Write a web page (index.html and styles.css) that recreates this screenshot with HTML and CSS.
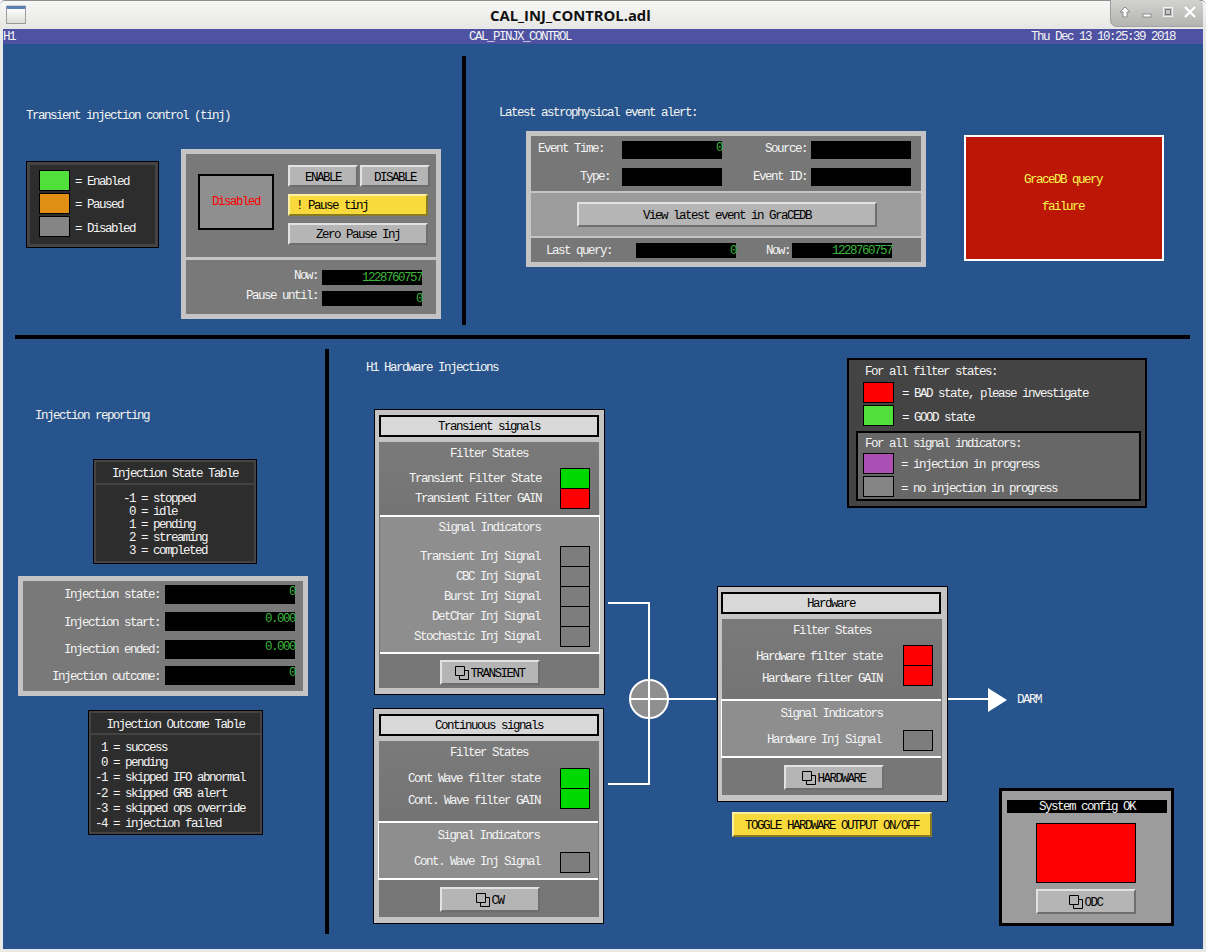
FILE: index.html
```html
<!DOCTYPE html>
<html lang="en">
<head>
    <meta charset="UTF-8">
    <title>CAL_INJ_CONTROL.adl</title>
    <link rel="stylesheet" href="styles.css">
</head>
<body>
<div class="window">
    <div class="titlebar">
        <div class="win-icon"></div>
        <div class="win-title">CAL_INJ_CONTROL.adl</div>
        <div class="win-buttons">
            <svg width="14" height="14" viewBox="0 0 14 14"><path d="M7 2 L12 7 H9 V12 H5 V7 H2 Z" fill="#fff" stroke="#8a8a8a" stroke-width="1"/></svg>
            <svg width="14" height="14" viewBox="0 0 14 14"><rect x="3" y="9" width="8" height="3" fill="#fff" stroke="#8a8a8a"/></svg>
            <svg width="14" height="14" viewBox="0 0 14 14"><rect x="2.5" y="2.5" width="9" height="9" fill="none" stroke="#f2f2f2" stroke-width="1"/><rect x="4.5" y="4.5" width="5" height="5" fill="none" stroke="#777"/></svg>
            <svg width="14" height="14" viewBox="0 0 14 14"><path d="M2 2 L12 12 M12 2 L2 12" stroke="#fff" stroke-width="2.4" fill="none"/></svg>
        </div>
    </div>
    <div class="statusbar">
        <div class="txt status-text status-left">H1</div>
        <div class="txt status-text status-mid">CAL_PINJX_CONTROL</div>
        <div class="txt status-text status-right">Thu Dec 13 10:25:39 2018</div>
    </div>

    <div class="screen">
        <!-- divider lines -->
        <div class="rule rule-top-v"></div>
        <div class="rule rule-mid-h"></div>
        <div class="rule rule-low-v"></div>

        <div class="txt heading h-tinj">Transient injection control (tinj)</div>
        <div class="txt heading h-event">Latest astrophysical event alert:</div>
        <div class="txt heading h-report">Injection reporting</div>
        <div class="txt heading h-hw">H1 Hardware Injections</div>

        <!-- tinj legend -->
        <div class="tinj-legend">
            <div class="legend-row"><i class="swatch sw-green"></i><span class="txt">= Enabled</span></div>
            <div class="legend-row"><i class="swatch sw-orange"></i><span class="txt">= Paused</span></div>
            <div class="legend-row"><i class="swatch sw-gray"></i><span class="txt">= Disabled</span></div>
        </div>

        <!-- tinj control -->
        <div class="tinj-panel">
            <div class="tinj-top">
                <div class="state-box txt">Disabled</div>
                <div class="tinj-buttons">
                    <div class="btn-pair">
                        <div class="btn btn-half txt">ENABLE</div>
                        <div class="btn btn-half txt">DISABLE</div>
                    </div>
                    <div class="btn btn-yellow btn-wide txt">! Pause tinj</div>
                    <div class="btn btn-wide txt">Zero Pause Inj</div>
                </div>
            </div>
            <div class="tinj-bottom">
                <div class="field-row"><span class="txt field-label">Now:</span><span class="readout w100 txt">1228760757</span></div>
                <div class="field-row"><span class="txt field-label">Pause until:</span><span class="readout w100 txt">0</span></div>
            </div>
        </div>

        <!-- event alert -->
        <div class="event-panel">
            <div class="event-fields">
                <div class="event-row">
                    <span class="txt ev-l1">Event Time:</span><span class="readout w100 tall txt">0</span>
                    <span class="txt ev-l2">Source:</span><span class="readout w100 tall txt"></span>
                </div>
                <div class="event-row">
                    <span class="txt ev-l1 ev-type">Type:</span><span class="readout w100 tall txt"></span>
                    <span class="txt ev-l2">Event ID:</span><span class="readout w100 tall txt"></span>
                </div>
            </div>
            <div class="event-view">
                <div class="btn btn-view txt">View latest event in GraCEDB</div>
            </div>
            <div class="event-query">
                <span class="txt eq-label">Last query:</span><span class="readout w100 txt">0</span>
                <span class="txt eq-now">Now:</span><span class="readout w100 txt">1228760757</span>
            </div>
        </div>

        <div class="grace-box">
            <div class="txt">GraceDB query</div>
            <div class="txt">failure</div>
        </div>

        <!-- reporting -->
        <div class="table-box state-table">
            <div class="table-head txt">Injection State Table</div>
            <pre class="table-body txt">-1 = stopped
 0 = idle
 1 = pending
 2 = streaming
 3 = completed</pre>
        </div>

        <div class="report-panel">
            <div class="report-row"><span class="txt">Injection state:</span><span class="readout w130 txt">0</span></div>
            <div class="report-row"><span class="txt">Injection start:</span><span class="readout w130 txt">0.000</span></div>
            <div class="report-row"><span class="txt">Injection ended:</span><span class="readout w130 txt">0.000</span></div>
            <div class="report-row"><span class="txt">Injection outcome:</span><span class="readout w130 txt">0</span></div>
        </div>

        <div class="table-box outcome-table">
            <div class="table-head txt">Injection Outcome Table</div>
            <pre class="table-body txt"> 1 = success
 0 = pending
-1 = skipped IFO abnormal
-2 = skipped GRB alert
-3 = skipped ops override
-4 = injection failed</pre>
        </div>

        <!-- signal path -->
        <svg class="wires" width="420" height="200" viewBox="0 0 420 200">
            <path d="M0 1 H41 V182 H0 M41 97 H108 M340 97 H384" fill="none" stroke="#fff" stroke-width="2"/>
            <circle cx="41" cy="97" r="19" fill="#8f8f8f" stroke="#fff" stroke-width="2"/>
            <path d="M22 97 H108 M41 78 V116" fill="none" stroke="#fff" stroke-width="2"/>
            <path d="M380 86 L399 98 L380 110 Z" fill="#fff"/>
        </svg>
        <div class="txt darm">DARM</div>

        <!-- filter blocks -->
        <div class="block block-transient">
            <div class="block-title txt">Transient signals</div>
            <div class="block-body">
                <div class="sec-filter sf-transient">
                    <div class="sec-name txt">Filter States</div>
                    <div class="sig-rows fr-transient">
                        <div class="sig-row"><span class="txt">Transient Filter State</span><i class="led led-green"></i></div>
                        <div class="sig-row"><span class="txt">Transient Filter GAIN</span><i class="led led-red"></i></div>
                    </div>
                </div>
                <div class="sec-signal ss-transient">
                    <div class="sec-name txt">Signal Indicators</div>
                    <div class="sig-rows sr-transient">
                        <div class="sig-row"><span class="txt">Transient Inj Signal</span><i class="led"></i></div>
                        <div class="sig-row"><span class="txt">CBC Inj Signal</span><i class="led"></i></div>
                        <div class="sig-row"><span class="txt">Burst Inj Signal</span><i class="led"></i></div>
                        <div class="sig-row"><span class="txt">DetChar Inj Signal</span><i class="led"></i></div>
                        <div class="sig-row"><span class="txt">Stochastic Inj Signal</span><i class="led"></i></div>
                    </div>
                </div>
                <div class="sec-foot foot-transient">
                    <div class="btn btn-rel txt"><svg class="rel-icon" width="14" height="14" viewBox="0 0 14 14"><path d="M0.5 0.5 H9.5 V9.5 H0.5 Z M9.5 4.5 H13.5 V13.5 H4.5 V9.5" fill="none" stroke="#000"/></svg>TRANSIENT</div>
                </div>
            </div>
        </div>

        <div class="block block-cw">
            <div class="block-title txt">Continuous signals</div>
            <div class="block-body">
                <div class="sec-filter sf-cw">
                    <div class="sec-name txt">Filter States</div>
                    <div class="sig-rows fr-cw">
                        <div class="sig-row"><span class="txt">Cont Wave filter state</span><i class="led led-green"></i></div>
                        <div class="sig-row"><span class="txt">Cont. Wave filter GAIN</span><i class="led led-green"></i></div>
                    </div>
                </div>
                <div class="sec-signal ss-cw">
                    <div class="sec-name txt">Signal Indicators</div>
                    <div class="sig-rows sr-cw">
                        <div class="sig-row"><span class="txt">Cont. Wave Inj Signal</span><i class="led"></i></div>
                    </div>
                </div>
                <div class="sec-foot foot-cw">
                    <div class="btn btn-rel txt"><svg class="rel-icon" width="14" height="14" viewBox="0 0 14 14"><path d="M0.5 0.5 H9.5 V9.5 H0.5 Z M9.5 4.5 H13.5 V13.5 H4.5 V9.5" fill="none" stroke="#000"/></svg>CW</div>
                </div>
            </div>
        </div>

        <div class="block block-hw">
            <div class="block-title txt">Hardware</div>
            <div class="block-body">
                <div class="sec-filter sf-hw">
                    <div class="sec-name txt">Filter States</div>
                    <div class="sig-rows fr-hw">
                        <div class="sig-row"><span class="txt">Hardware filter state</span><i class="led led-red"></i></div>
                        <div class="sig-row"><span class="txt">Hardware filter GAIN</span><i class="led led-red"></i></div>
                    </div>
                </div>
                <div class="sec-signal ss-hw">
                    <div class="sec-name txt">Signal Indicators</div>
                    <div class="sig-rows sr-hw">
                        <div class="sig-row"><span class="txt">Hardware Inj Signal</span><i class="led"></i></div>
                    </div>
                </div>
                <div class="sec-foot foot-hw">
                    <div class="btn btn-rel txt"><svg class="rel-icon" width="14" height="14" viewBox="0 0 14 14"><path d="M0.5 0.5 H9.5 V9.5 H0.5 Z M9.5 4.5 H13.5 V13.5 H4.5 V9.5" fill="none" stroke="#000"/></svg>HARDWARE</div>
                </div>
            </div>
        </div>

        <div class="btn btn-yellow btn-toggle txt">TOGGLE HARDWARE OUTPUT ON/OFF</div>

        <!-- colour key -->
        <div class="key-panel">
            <div class="key-head txt">For all filter states:</div>
            <div class="key-row"><i class="swatch sw-red"></i><span class="txt">= BAD state, please investigate</span></div>
            <div class="key-row"><i class="swatch sw-green"></i><span class="txt">= GOOD state</span></div>
            <div class="key-inner">
                <div class="key-head txt">For all signal indicators:</div>
                <div class="key-row"><i class="swatch sw-purple"></i><span class="txt">= injection in progress</span></div>
                <div class="key-row"><i class="swatch sw-gray"></i><span class="txt">= no injection in progress</span></div>
            </div>
        </div>

        <!-- odc -->
        <div class="odc-panel">
            <div class="odc-head txt">System config OK</div>
            <div class="odc-light"></div>
            <div class="btn btn-rel txt"><svg class="rel-icon" width="14" height="14" viewBox="0 0 14 14"><path d="M0.5 0.5 H9.5 V9.5 H0.5 Z M9.5 4.5 H13.5 V13.5 H4.5 V9.5" fill="none" stroke="#000"/></svg>ODC</div>
        </div>
    </div>
</div>
</body>
</html>
```

FILE: styles.css
```css
* {
    box-sizing: border-box;
}

html, body {
    margin: 0;
    padding: 0;
    width: 1206px;
    height: 952px;
    overflow: hidden;
    background: #fff;
}

.window {
    width: 1206px;
    height: 952px;
    display: flex;
    flex-direction: column;
    background: #e8e8e6;
    border-radius: 5px 5px 0 0;
    border-top: 1px solid #8e8e8e;
    padding: 0 3px 3px;
}

.titlebar {
    height: 28px;
    flex: none;
    margin: 0 -3px;
    padding-left: 6px;
    display: flex;
    align-items: flex-start;
    position: relative;
    background: linear-gradient(#f7f7f5, #e6e6e4);
    border-radius: 5px 5px 0 0;
}

.win-icon {
    width: 20px;
    height: 18px;
    margin-top: 5px;
    border: 1px solid #9a9a9a;
    border-top: 3px solid #5b80b8;
    border-radius: 1px;
    background: linear-gradient(#fdfdfd, #dededc);
    box-shadow: 0 -1px 0 #cfcfcf;
}

.win-title {
    position: absolute;
    left: 490px;
    top: 4px;
    font-family: "Open Sans", sans-serif;
    font-weight: 700;
    font-size: 14.8px;
    line-height: 20px;
    color: #111;
}

.win-buttons {
    position: absolute;
    right: 3px;
    top: -1px;
    width: 93px;
    height: 27px;
    padding: 0 6px 2px 7px;
    display: flex;
    align-items: center;
    justify-content: space-between;
    background: linear-gradient(#d2d2d0, #b4b4b2);
    border-radius: 0 5px 0 7px;
    border-left: 1px solid #9d9d9d;
    border-bottom: 1px solid #a3a3a1;
}

.statusbar {
    height: 15px;
    flex: none;
    background: #4f52a3;
    display: flex;
    align-items: center;
}

.status-text {
    color: #d9daea;
}

.status-left { width: 466px; }
.status-mid { width: 562px; }

/* the display itself: a free canvas of widgets, like the MEDM screen it shows */
.screen {
    position: relative;
    flex: 1;
    background: #27548c;
}

.txt {
    font-family: "Liberation Mono", monospace;
    font-size: 12.5px;
    letter-spacing: -1.5px;
    line-height: 14px;
    color: #f4f4f4;
    white-space: pre;
}

.rule {
    position: absolute;
    background: #000;
}

.rule-top-v { left: 459px; top: 12px; width: 4px; height: 269px; }
.rule-mid-h { left: 12px; top: 291px; width: 1175px; height: 4px; }
.rule-low-v { left: 322px; top: 305px; width: 4px; height: 585px; }

.heading {
    position: absolute;
}

.h-tinj { left: 23px; top: 65px; }
.h-event { left: 496px; top: 62px; }
.h-report { left: 32px; top: 365px; }
.h-hw { left: 363px; top: 317px; }

.swatch {
    display: block;
    width: 31px;
    height: 21px;
    border: 1px solid #000;
    flex: none;
}

.sw-green { background: #51e03b; }
.sw-orange { background: #e19015; }
.sw-gray { background: #858585; }
.sw-red { background: #ff0000; }
.sw-purple { background: #ab4fb5; }

.tinj-legend {
    position: absolute;
    left: 23px;
    top: 117px;
    width: 133px;
    height: 87px;
    padding: 8px 0 0 12px;
    border: 1px solid #000;
    outline: 3px solid #444;
    outline-offset: -4px;
    background: #2d2d2d;
    display: flex;
    flex-direction: column;
    gap: 2px;
}

.legend-row {
    display: flex;
    align-items: center;
    gap: 5px;
}

.legend-row .txt {
    padding-top: 2px;
}

.legend-row:last-child .txt {
    padding-top: 4px;
}

.btn {
    display: flex;
    align-items: center;
    justify-content: center;
    padding-top: 2px;
    background: #b5b5b5;
    color: #000;
    border: 2px solid;
    border-color: #e2e2e2 #6e6e6e #6e6e6e #e2e2e2;
}

.btn-yellow {
    background: #f9da3c;
    border-color: #fdf0a0 #8a7a20 #8a7a20 #fdf0a0;
}

.tinj-panel {
    position: absolute;
    left: 178px;
    top: 105px;
    width: 260px;
    height: 170px;
    border: 5px solid #c4c4c4;
    background: #797979;
    display: flex;
    flex-direction: column;
}

.tinj-top {
    height: 103px;
    padding: 11px 0 0 12px;
    display: flex;
    gap: 14px;
}

.state-box {
    width: 76px;
    height: 56px;
    margin-top: 9px;
    border: 2px solid #000;
    background: #8f8f8f;
    color: #ff0000;
    display: flex;
    align-items: center;
    justify-content: center;
    padding-bottom: 1px;
}

.tinj-buttons {
    display: flex;
    flex-direction: column;
    gap: 7px;
}

.btn-pair {
    display: flex;
    gap: 2px;
}

.btn-half {
    width: 70px;
    height: 22px;
    padding-top: 3px;
}

.btn-wide {
    width: 140px;
    height: 22px;
}

.btn-yellow.btn-wide {
    justify-content: flex-start;
    padding-left: 6px;
}

.tinj-bottom {
    flex: 1;
    border-top: 3px solid #c4c4c4;
    padding: 9px 14px 0 0;
    display: flex;
    flex-direction: column;
    align-items: flex-end;
    gap: 4px;
}

.field-row {
    display: flex;
    align-items: center;
    gap: 4px;
}

.field-label {
    padding-bottom: 2px;
}

.field-row + .field-row .field-label {
    padding-bottom: 4px;
}

.readout {
    display: block;
    height: 15px;
    background: #000;
    color: #3db53d;
    text-align: right;
    line-height: 16px;
}

.w100 { width: 100px; }
.w130 { width: 130px; height: 19px; line-height: 15px; }
.tall { height: 18px; line-height: 15px; }

.event-panel {
    position: absolute;
    left: 523px;
    top: 87px;
    width: 400px;
    height: 136px;
    border: 5px solid #c4c4c4;
    background: #c4c4c4;
    display: flex;
    flex-direction: column;
}

.event-fields {
    height: 55px;
    background: #777;
    padding-top: 5px;
    display: flex;
    flex-direction: column;
    gap: 9px;
}

.event-row {
    display: flex;
    align-items: center;
}

.ev-l1 {
    width: 91px;
    padding-left: 7px;
}

.ev-type {
    padding-left: 49px;
}

.ev-l2 {
    width: 89px;
    text-align: right;
    padding-right: 4px;
}

.event-row:first-child .ev-l1,
.event-row:first-child .ev-l2 {
    padding-bottom: 2px;
}

.event-view {
    height: 43px;
    margin-top: 2px;
    background: #9c9c9c;
    display: flex;
    justify-content: center;
    padding: 9px 0 0 2px;
}

.btn-view {
    width: 300px;
    height: 25px;
}

.event-query {
    height: 24px;
    margin-top: 2px;
    background: #777;
    display: flex;
    align-items: center;
}

.eq-label {
    width: 105px;
    padding: 2px 0 0 15px;
}

.eq-now {
    width: 56px;
    padding: 2px 0 0 30px;
}

.grace-box {
    position: absolute;
    left: 961px;
    top: 91px;
    width: 200px;
    height: 126px;
    border: 2px solid #fff;
    background: #bc1606;
    display: flex;
    flex-direction: column;
    align-items: center;
    padding: 36px 2px 0 0;
    gap: 13px;
}

.grace-box .txt {
    color: #f7f74a;
}

.table-box {
    position: absolute;
    border: 2px solid #000;
    outline: 2px solid #444;
    outline-offset: -3px;
    background: #2d2d2d;
}

.state-table {
    left: 90px;
    top: 415px;
    width: 164px;
    height: 105px;
}

.outcome-table {
    left: 85px;
    top: 666px;
    width: 175px;
    height: 125px;
}

.table-head {
    height: 24px;
    line-height: 26px;
    text-align: center;
    border-bottom: 2px solid #444;
}

.outcome-table .table-head {
    height: 23px;
}

.table-body {
    margin: 0;
    padding-left: 28px;
    padding-top: 8px;
    line-height: 13px;
}

.outcome-table .table-body {
    padding-left: 5px;
    padding-top: 6px;
    line-height: 15.2px;
}

.report-panel {
    position: absolute;
    left: 15px;
    top: 532px;
    width: 290px;
    height: 120px;
    border: 5px solid #c4c4c4;
    background: #797979;
    padding-top: 4px;
    display: flex;
    flex-direction: column;
    gap: 8px;
}

.report-row {
    display: flex;
    justify-content: flex-end;
    align-items: center;
    gap: 5px;
    padding-right: 8px;
}

.report-row:nth-child(even) .txt:first-child {
    padding-top: 2px;
}

.report-row:nth-child(3) { margin-top: 1px; }
.report-row:nth-child(4) { margin-top: -1px; }

.wires {
    position: absolute;
    left: 605px;
    top: 558px;
}

.darm {
    position: absolute;
    left: 1014px;
    top: 649px;
}

.block {
    position: absolute;
    width: 231px;
    border: 1px solid #000;
    background: #c4c4c4;
    padding-top: 5px;
}

.block-transient { left: 371px; top: 365px; height: 286px; padding-left: 4px; padding-right: 5px; }
.block-cw { left: 370px; top: 664px; height: 216px; padding-left: 5px; padding-right: 4px; }
.block-hw { left: 714px; top: 542px; height: 216px; padding-left: 3px; padding-right: 6px; }

.block-title {
    height: 22px;
    border: 2px solid #000;
    background: #d8d8d8;
    color: #000;
    text-align: center;
    line-height: 20px;
}

.block-body {
    margin-top: 5px;
    width: 220px;
    background: #777;
    display: flex;
    flex-direction: column;
}

.block-transient .block-body { height: 246px; }
.block-cw .block-body { height: 176px; }
.block-hw .block-body { height: 176px; margin-left: 1px; }

.sec-filter {
    background: linear-gradient(#7a7a7a, #747474);
    padding-top: 5px;
}

.sf-transient { height: 73px; }
.sf-cw { height: 80px; }
.sf-hw { height: 80px; }

.sec-name {
    text-align: center;
}

.sec-signal {
    background: #8e8e8e;
    border-top: 2px solid #fff;
    border-bottom: 2px solid #fff;
    padding-top: 4px;
}

.ss-transient { height: 139px; margin-left: 1px; margin-right: -1px; border-right: 1px solid #fff; }
.ss-cw { height: 59px; margin-left: -1px; margin-right: 1px; border-left: 1px solid #fff; padding-top: 6px; }
.ss-hw { height: 59px; margin-left: -1px; margin-right: 1px; border-left: 1px solid #fff; padding-top: 6px; }

.sig-rows {
    display: flex;
    flex-direction: column;
    padding-right: 9px;
}

.ss-cw .sig-rows,
.ss-hw .sig-rows {
    padding-right: 8px;
}

.fr-transient { margin-top: 7px; }
.fr-cw { margin-top: 8px; }
.fr-hw { margin-top: 7px; }
.sr-transient { margin-top: 11px; }
.sr-cw { margin-top: 9px; }
.sr-hw { margin-top: 9px; }

.sig-row {
    height: 20px;
    display: flex;
    justify-content: flex-end;
    align-items: center;
    gap: 19px;
}

.sig-row span {
    padding-top: 2px;
}

.sr-transient .sig-row,
.sr-cw .sig-row,
.fr-cw .sig-row {
    gap: 20px;
}

.fr-hw .sig-row {
    gap: 21px;
}

.sr-hw .sig-row {
    gap: 22px;
}

.sr-cw .sig-row span,
.sr-hw .sig-row span {
    padding-top: 0;
}

.fr-hw .sig-row:first-child span {
    padding-top: 4px;
}

.fr-cw .sig-row:last-child span {
    padding-top: 6px;
}

.fr-hw .sig-row:last-child span {
    padding-top: 8px;
}

.led {
    display: block;
    width: 30px;
    height: 21px;
    margin-bottom: -1px;
    border: 1px solid #000;
    background: #7d7d7d;
}

.led-green { background: #00d900; }
.led-red { background: #ff0000; }

.sec-foot {
    flex: 1;
    display: flex;
    justify-content: center;
    padding-top: 6px;
}

.foot-transient { padding-left: 2px; }
.foot-cw { padding-left: 2px; padding-top: 7px; }
.foot-hw { padding-left: 4px; padding-top: 7px; }

.btn-rel {
    width: 100px;
    height: 25px;
    gap: 1px;
}

.rel-icon {
    flex: none;
    margin-top: -2px;
}

.btn-toggle {
    position: absolute;
    left: 729px;
    top: 768px;
    width: 200px;
    height: 25px;
}

.key-panel {
    position: absolute;
    left: 844px;
    top: 314px;
    width: 300px;
    height: 150px;
    border: 2px solid #000;
    background: #444;
    padding: 5px 0 0 14px;
}

.key-head {
    padding-left: 2px;
}

.key-row {
    display: flex;
    align-items: center;
    gap: 8px;
    margin-top: 2px;
}

.key-row .txt {
    padding-top: 2px;
}

.key-row + .key-row .txt {
    padding-top: 4px;
}

.key-head + .key-row {
    margin-top: 3px;
}

.key-inner {
    width: 285px;
    height: 70px;
    margin: 5px 0 0 -7px;
    border: 2px solid #000;
    background: #676767;
    padding: 4px 0 0 5px;
}

.key-inner .key-head + .key-row {
    margin-top: 2px;
}

.key-inner .key-row {
    gap: 7px;
}

.odc-panel {
    position: absolute;
    left: 996px;
    top: 744px;
    width: 175px;
    height: 138px;
    border: 3px solid #000;
    background: #9c9c9c;
    display: flex;
    flex-direction: column;
    align-items: center;
    padding: 9px 1px 0 0;
}

.odc-head {
    width: 160px;
    height: 13px;
    margin-left: 2px;
    background: #000;
    text-align: center;
    line-height: 14px;
}

.odc-light {
    width: 100px;
    height: 60px;
    margin: 10px 0 6px;
    border: 1px solid #000;
    background: #ff0000;
}
```
